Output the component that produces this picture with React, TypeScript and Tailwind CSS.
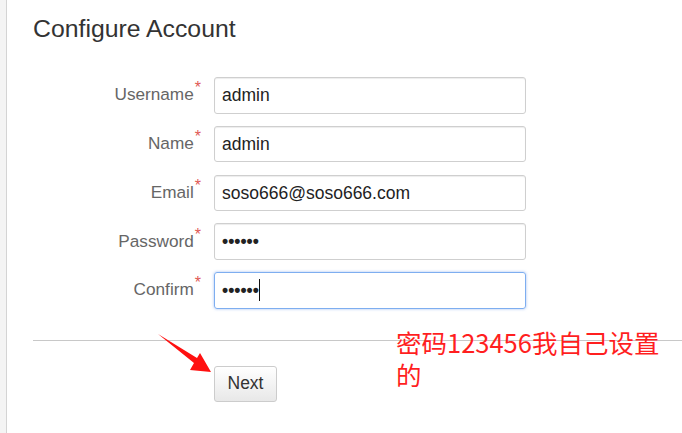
import React from "react";

interface IField {
  label: string;
  value: string;
  password?: boolean;
  focused?: boolean;
}

const fields: IField[] = [
  { label: "Username", value: "admin" },
  { label: "Name", value: "admin" },
  { label: "Email", value: "soso666@soso666.com" },
  { label: "Password", value: "••••••", password: true },
  { label: "Confirm", value: "••••••", password: true, focused: true },
];

const App = () => {
  return (
    <div className="relative flex w-[682px] h-[433px] overflow-hidden bg-white font-['Liberation_Sans',Arial,sans-serif]">
      {/* left gutter */}
      <div className="w-[7px] shrink-0 bg-[#f4f4f4] border-r border-[#d4d4d4]" />

      <div className="flex-1 pl-[26px] pt-[14px]">
        <h1 className="text-[24.8px] leading-[30px] text-[#333]">Configure Account</h1>

        <div className="mt-[33px] flex flex-col gap-[12.25px]">
          {fields.map((field) => (
            <div key={field.label} className="flex items-center h-[36.5px]">
              <div className="w-[168px] flex justify-end">
                <span className="text-[17.2px] text-[#666]">{field.label}</span>
                <span className="text-[16px] leading-[14px] text-[#e05a55] ml-[1px] -mt-[1px]">*</span>
              </div>
              <div
                className={
                  field.focused
                    ? "ml-[13px] w-[312px] h-full flex items-center px-[7px] rounded-[3px] border border-[#7eaef0] shadow-[0_0_3px_rgba(102,150,233,0.6)] text-[17.5px] text-[#222]"
                    : "ml-[13px] w-[312px] h-full flex items-center px-[7px] rounded-[3px] border border-[#cfcfcf] shadow-[inset_0_1px_1px_rgba(0,0,0,0.075)] text-[17.5px] text-[#222]"
                }
              >
                <span className={field.password ? "font-bold" : ""}>{field.value}</span>
                {field.focused && <span className="w-[1.5px] h-[22px] bg-[#111]" />}
              </div>
            </div>
          ))}
        </div>

        <div className="mt-[31px] border-t border-[#c8c8c8]" />

        <button className="mt-[25px] ml-[181px] w-[63px] h-[36px] rounded-[3px] border border-[#ccc] bg-gradient-to-b from-white to-[#e8e8e8] text-[17.5px] text-[#333]">
          Next
        </button>
      </div>

      {/* annotation */}
      <div className="absolute left-[396px] top-[326px] text-[25.5px] leading-[32px] text-[#ff1f1f] font-['Noto_Sans_CJK_SC',sans-serif]">
        密码123456我自己设置
        <br />的
      </div>
      <svg className="absolute left-0 top-0" width="682" height="433" viewBox="0 0 682 433">
        <polygon points="158,334 197,358 200,353 211,372 190,370 194,363" fill="#ff1010" />
      </svg>
    </div>
  );
};

export default App;
